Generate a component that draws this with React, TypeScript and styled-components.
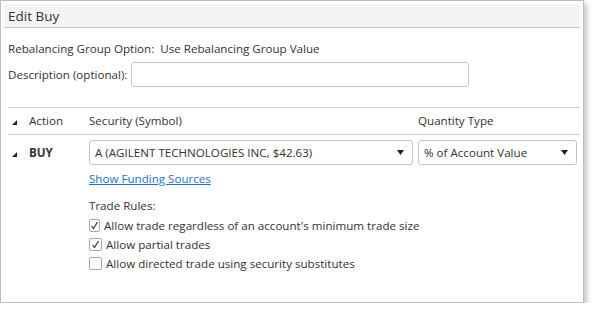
import styled, { createGlobalStyle } from 'styled-components';

const GlobalStyle = createGlobalStyle`
  body {
    margin: 0;
    background: #fff;
    font-family: 'Open Sans', 'Segoe UI', Arial, sans-serif;
    font-size: 11.6px;
    color: #333;
  }
`;

const Panel = styled.div`
  width: 584px;
  height: 303px;
  border: 1px solid #bdbdbd;
  padding: 3px;
  box-sizing: border-box;
  box-shadow: 3px 3px 5px rgba(0, 0, 0, 0.22);
  background: #fff;
`;

const Header = styled.div`
  height: 23px;
  background: #f4f4f4;
  border-bottom: 1px solid #c8c8c8;
  padding-left: 4px;
  display: flex;
  align-items: center;
  font-size: 13.5px;
  color: #333;
`;

const Body = styled.div`
  padding: 0 0 0 4px;
  display: flex;
  flex-direction: column;
`;

const FieldRow = styled.div<{ $top: number }>`
  display: flex;
  align-items: center;
  margin-top: ${(p) => p.$top}px;
  line-height: 18px;
  gap: 6px;
  white-space: nowrap;
`;

const Input = styled.div`
  width: 338px;
  height: 25px;
  box-sizing: border-box;
  border: 1px solid #c4c4c4;
  border-radius: 3px;
  margin-left: -2px;
`;

const Divider = styled.div<{ $top: number }>`
  border-top: 1px solid #d2d2d2;
  margin-top: ${(p) => p.$top}px;
`;

const Grid = styled.div`
  display: grid;
  grid-template-columns: 76px 324px 159px;
  column-gap: 5px;
  align-items: start;
`;

const HeadCell = styled.div`
  height: 26px;
  display: flex;
  align-items: center;
  line-height: 18px;
`;

const FirstCell = styled.div<{ $bold?: boolean }>`
  display: flex;
  align-items: center;
  height: 25px;
  padding-left: 4px;
  gap: 12px;
  font-weight: ${(p) => (p.$bold ? 700 : 400)};
`;

const Tri = () => (
  <svg width="5" height="5" viewBox="0 0 5 5" style={{ marginTop: 3 }}>
    <polygon points="5,0 5,5 0,5" fill="#222" />
  </svg>
);

const DataRow = styled.div`
  padding-top: 5px;
`;

const Select = styled.div`
  height: 25px;
  box-sizing: border-box;
  border: 1px solid #c4c4c4;
  border-radius: 3px;
  display: flex;
  align-items: center;
  justify-content: space-between;
  padding: 0 8px 0 5px;
  white-space: nowrap;
`;

const Arrow = () => (
  <svg width="7" height="5" viewBox="0 0 7 5">
    <polygon points="0,0 7,0 3.5,5" fill="#222" />
  </svg>
);

const Link = styled.a`
  display: block;
  margin-top: 5px;
  line-height: 18px;
  color: #1a73c9;
  text-decoration: underline;
  cursor: pointer;
`;

const Label = styled.div<{ $top: number }>`
  margin-top: ${(p) => p.$top}px;
  line-height: 18px;
`;

const CheckList = styled.div`
  margin-top: 1px;
`;

const CheckRow = styled.label`
  display: flex;
  align-items: center;
  height: 19px;
  gap: 4px;
  white-space: nowrap;
`;

const Box = styled.span`
  width: 13px;
  height: 13px;
  box-sizing: border-box;
  border: 1px solid #a9a9a9;
  border-radius: 2px;
  display: flex;
  align-items: center;
  justify-content: center;
`;

const Check = () => (
  <svg width="9" height="9" viewBox="0 0 9 9">
    <path d="M1.5 5 L3.5 7.5 L7.5 1" fill="none" stroke="#333" strokeWidth="1.2" />
  </svg>
);

const rules = [
  { text: "Allow trade regardless of an account's minimum trade size", on: true },
  { text: 'Allow partial trades', on: true },
  { text: 'Allow directed trade using security substitutes', on: false },
];

export default function App() {
  return (
    <>
      <GlobalStyle />
      <Panel>
        <Header>Edit Buy</Header>
        <Body>
          <FieldRow $top={12}>
            <span>Rebalancing Group Option:</span>
            <span>Use Rebalancing Group Value</span>
          </FieldRow>
          <FieldRow $top={4}>
            <span>Description (optional):</span>
            <Input />
          </FieldRow>
          <Divider $top={20} />
          <Grid>
            <HeadCell>
              <FirstCell>
                <Tri />
                Action
              </FirstCell>
            </HeadCell>
            <HeadCell>Security (Symbol)</HeadCell>
            <HeadCell>Quantity Type</HeadCell>
          </Grid>
          <Divider $top={0} />
          <DataRow>
            <Grid>
              <FirstCell $bold>
                <Tri />
                BUY
              </FirstCell>
              <div>
                <Select>
                  <span>A (AGILENT TECHNOLOGIES INC, $42.63)</span>
                  <Arrow />
                </Select>
                <Link>Show Funding Sources</Link>
                <Label $top={9}>Trade Rules:</Label>
                <CheckList>
                  {rules.map((r) => (
                    <CheckRow key={r.text}>
                      <Box>{r.on && <Check />}</Box>
                      {r.text}
                    </CheckRow>
                  ))}
                </CheckList>
              </div>
              <div>
                <Select>
                  <span>% of Account Value</span>
                  <Arrow />
                </Select>
              </div>
            </Grid>
          </DataRow>
        </Body>
      </Panel>
    </>
  );
}
